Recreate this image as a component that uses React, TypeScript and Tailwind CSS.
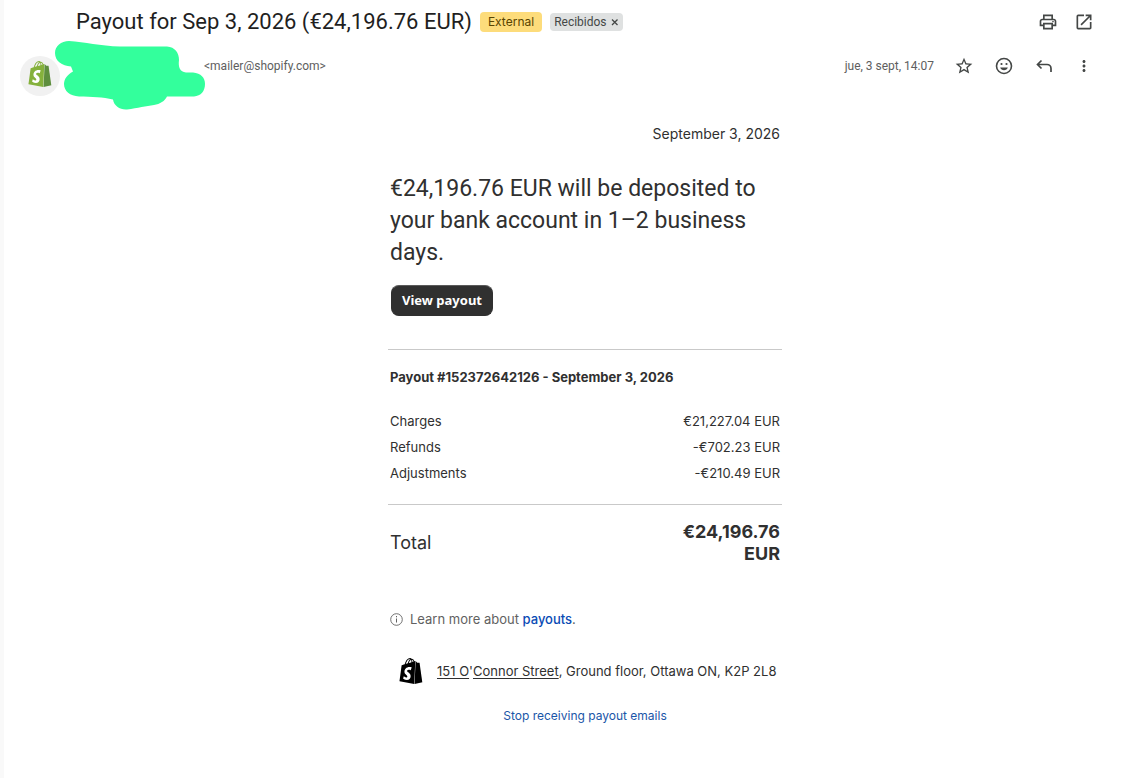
import React from "react";
import { MdMoreVert, MdOpenInNew, MdOutlinePrint, MdStarOutline } from "react-icons/md";

const BAG_SIDE =
  "M15.337 23.979l7.216-1.561s-2.604-17.613-2.625-17.73c-.018-.116-.114-.192-.211-.192s-1.929-.136-1.929-.136-1.275-1.274-1.439-1.411c-.045-.037-.075-.057-.121-.074l-.914 21.104h.023z";
const BAG_FRONT =
  "M11.71 11.305s-.81-.424-1.774-.424c-1.447 0-1.504.906-1.504 1.141 0 1.232 3.24 1.715 3.24 4.629 0 2.295-1.44 3.76-3.406 3.76-2.354 0-3.54-1.465-3.54-1.465l.646-2.086s1.245 1.066 2.28 1.066c.675 0 .975-.545.975-.932 0-1.619-2.654-1.694-2.654-4.359-.034-2.237 1.571-4.416 4.827-4.416 1.257 0 1.875.361 1.875.361l-.945 2.715-.02.01zM11.17.83c.136 0 .271.038.405.135-.984.465-2.064 1.639-2.508 3.992-.656.213-1.293.405-1.889.578C7.697 3.75 8.951.84 11.17.84V.83zm1.235 2.949v.135c-.754.232-1.583.484-2.394.736.466-1.777 1.333-2.645 2.085-2.971.193.501.309 1.176.309 2.1zm.539-2.234c.694.074 1.141.867 1.429 1.755-.349.114-.735.231-1.158.366v-.252c0-.752-.096-1.371-.271-1.871v.002zm2.992 1.289c-.02 0-.06.021-.078.021s-.289.075-.714.21c-.423-1.233-1.176-2.37-2.508-2.37h-.115C12.135.209 11.669 0 11.265 0 8.159 0 6.675 3.877 6.21 5.846c-1.194.365-2.063.636-2.16.674-.675.213-.694.232-.772.87-.075.462-1.83 14.063-1.83 14.063L15.009 24l.927-21.166z";

function Bag({ className, front, side }: { className: string; front: string; side: string }) {
  return (
    <svg viewBox="0 0 24 24" className={className} aria-hidden="true">
      <path d="M4 8h9v13H4z" fill="#fff" />
      <path d={BAG_FRONT} fill={front} />
      <path d={BAG_SIDE} fill={side} />
    </svg>
  );
}

function IconButton({ label, children }: { label: string; children: React.ReactNode }) {
  return (
    <button type="button" aria-label={label} className="flex size-5 items-center justify-center text-[#444746]">
      {children}
    </button>
  );
}

const rows = [
  { label: "Charges", amount: "€21,227.04 EUR" },
  { label: "Refunds", amount: "-€702.23 EUR" },
  { label: "Adjustments", amount: "-€210.49 EUR" },
];

export default function App() {
  return (
    <div className="min-h-screen border-l-4 border-[#f9f9f9] bg-white font-['Inter',sans-serif] text-[#303030]">
      <header className="font-['Roboto',sans-serif]">
        <div className="flex items-center justify-between pt-2 pr-[29px] pl-[72px]">
          <div className="flex items-center gap-2">
            <h1 className="text-[22px] leading-7 text-[#1f1f1f]">Payout for Sep 3, 2026 (€24,196.76 EUR)</h1>
            <span className="rounded bg-[#fddc7b] px-2 font-['Inter',sans-serif] text-xs leading-5 text-[#594400]">
              External
            </span>
            <span className="flex items-center gap-1 rounded bg-[#dfe1e1] px-1 text-xs leading-[18px] text-[#444746]">
              Recibidos
              <button type="button" aria-label="Quitar etiqueta Recibidos">
                <svg viewBox="0 0 8 8" className="size-2" aria-hidden="true">
                  <path d="M1 1.500l5.500 5.500M6.500 1.500L1 7" stroke="currentColor" strokeWidth="1.300" />
                </svg>
              </button>
            </span>
          </div>
          <div className="flex gap-4">
            <IconButton label="Imprimir todo">
              <MdOutlinePrint className="size-5" />
            </IconButton>
            <IconButton label="En una ventana nueva">
              <MdOpenInNew className="size-5" />
            </IconButton>
          </div>
        </div>

        <div className="flex items-start pt-1 pr-[29px] pl-4">
          <div className="mt-4 flex size-10 shrink-0 items-center justify-center rounded-full bg-[#f1f1f1]">
            <Bag className="mb-1 size-[26px]" front="#85b13c" side="#5e8e3e" />
          </div>
          <svg viewBox="55 40 150 71" className="-ml-[5px] h-[71px] w-[150px] shrink-0" aria-hidden="true">
            <path
              fill="#33ff9c"
              d="M69 41C85 42 100 46 120 46.500H167C175 47 179 53 179 60C178 67 180 72 186 72.500H193C201 73 205 78 205 84C205 91 201 96 194 96.500H167C165 101 160 104 154 105C146 106 138 108 127 109.500C120 110 114 106 113 99.500C103 97 92 97 79 96.500C70 96 64 91 64 84C64 79 67 75 73 71.500L71 66.500C62 66 55 61 55 53C55 46 61 41 69 41Z"
            />
          </svg>
          <span className="-ml-px mt-4 text-xs leading-5 text-[#5e5e5e]">&lt;mailer@shopify.com&gt;</span>
          <div className="mt-4 ml-auto flex items-center gap-5">
            <time className="text-xs leading-5 text-[#5e5e5e]">jue, 3 sept, 14:07</time>
            <IconButton label="Destacar">
              <MdStarOutline className="size-5" />
            </IconButton>
            <IconButton label="Añadir reacción">
              <svg viewBox="0 0 20 20" className="size-5" fill="none" aria-hidden="true">
                <circle cx="10" cy="10" r="7.500" stroke="currentColor" strokeWidth="1.600" />
                <circle cx="7.500" cy="8" r="1.100" fill="currentColor" />
                <circle cx="12.500" cy="8" r="1.100" fill="currentColor" />
                <path d="M6.200 11.500h7.600c-.600 1.700-2 2.700-3.800 2.700s-3.200-1-3.800-2.700z" fill="currentColor" />
              </svg>
            </IconButton>
            <IconButton label="Responder">
              <svg viewBox="0 0 20 20" className="size-5" fill="none" aria-hidden="true">
                <path d="M7.500 4.500L3.500 8.500l4 4M3.500 8.500H13a4 4 0 0 1 4 4V16" stroke="currentColor" strokeWidth="1.700" />
              </svg>
            </IconButton>
            <IconButton label="Más">
              <MdMoreVert className="size-[18px]" />
            </IconButton>
          </div>
        </div>
      </header>

      <main className="pt-[11px] pr-[13px] pb-12 pl-14">
        <div className="mx-auto max-w-[394px]">
          <div className="px-0.5">
            <p className="text-right text-sm leading-6">September 3, 2026</p>
            <h2 className="mt-[27px] font-['Roboto',sans-serif] text-[23px] leading-8">
              €24,196.76 EUR will be deposited to your bank account in 1–2 business days.
            </h2>
            <a
              href="#payout"
              className="mt-4 ml-px inline-block rounded-lg border border-t-[#5a5a5a] border-[#303030] bg-[#303030] px-2.5 font-['Noto_Sans',sans-serif] text-[13px] leading-[29px] font-bold text-white"
            >
              View payout
            </a>
          </div>

          <section className="mt-[33px] border-t border-[#c9c9c9] px-0.5 pt-4">
            <h3 className="text-[13px] leading-[22px] font-bold">Payout #152372642126 - September 3, 2026</h3>
            <table className="mt-5 w-full text-[13px] leading-[26px]">
              <tbody>
                {rows.map((row) => (
                  <tr key={row.label}>
                    <th scope="row" className="text-left font-normal">{row.label}</th>
                    <td className="text-right">{row.amount}</td>
                  </tr>
                ))}
              </tbody>
            </table>
          </section>

          <div className="mt-[18px] flex items-center justify-between border-t border-[#c9c9c9] px-0.5 pt-4 text-lg leading-[22px]">
            <span>Total</span>
            <strong className="w-28 text-right font-bold">€24,196.76 EUR</strong>
          </div>

          <p className="mt-[42px] flex items-center px-0.5 text-[13px] leading-6 text-[#616161]">
            <svg viewBox="0 0 13 13" className="mr-[7px] size-[13px]" fill="none" stroke="currentColor" aria-hidden="true">
              <circle cx="6.500" cy="6.500" r="5.800" strokeWidth=".9" />
              <path d="M6.500 5.500v4M6.500 3v1.300" strokeWidth="1" />
            </svg>
            <span>
              Learn more about <a href="#payouts" className="font-medium text-[#0a4bb5]">payouts</a>.
            </span>
          </p>

          <footer className="mt-6">
            <div className="flex items-center pl-[10px] text-[13px] leading-8 whitespace-nowrap">
              <Bag className="mr-[13px] size-[26px]" front="#000" side="#000" />
              <address className="not-italic">
                <a href="#address">
                  <u className="underline-offset-2">151 O</u>'<u className="underline-offset-2">Connor Street</u>
                </a>
                , Ground floor, Ottawa ON, K2P 2L8
              </address>
            </div>
            <p className="mt-[17px] text-center text-xs leading-6">
              <a href="#unsubscribe" className="text-[#1a56a8]">Stop receiving payout emails</a>
            </p>
          </footer>
        </div>
      </main>
    </div>
  );
}
